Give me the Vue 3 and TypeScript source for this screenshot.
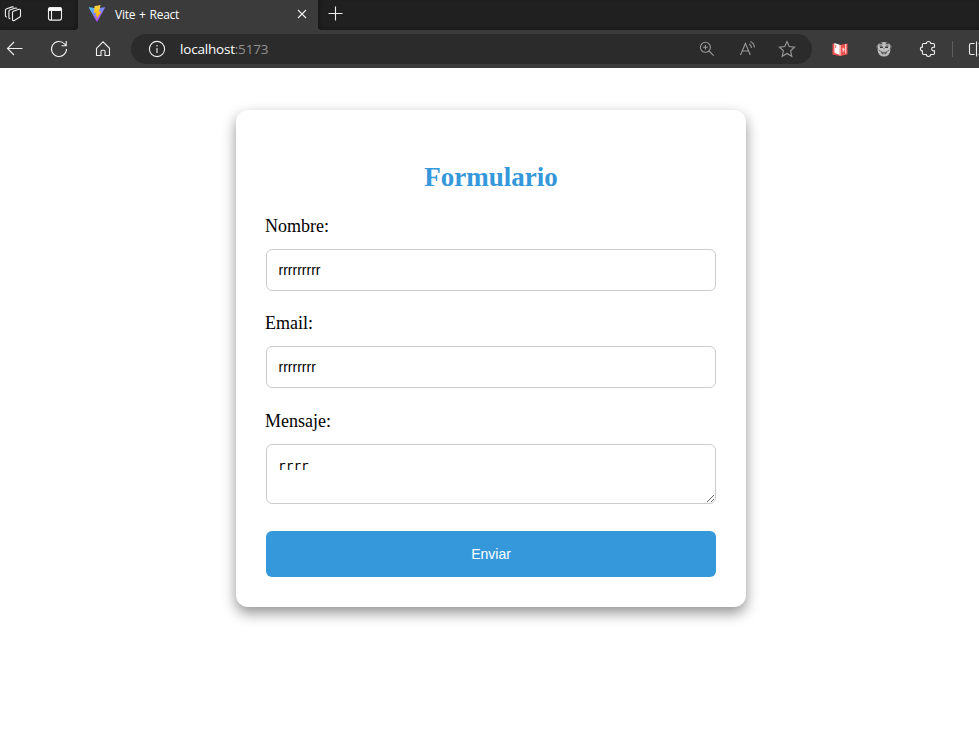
<script setup lang="ts">
import { ref } from 'vue'

const nombre = ref('rrrrrrrrr')
const email = ref('rrrrrrrr')
const mensaje = ref('rrrr')
</script>

<template>
  <div class="window">
    <header class="browser">
      <div class="tabs">
        <div class="tabs-left">
          <svg class="workspaces" width="18" height="18" viewBox="0 0 18 18">
            <path d="m9.3 6.3 5.7-2q1.5-.4 1.5 1v5.4q0 1-1 1.5l-5.2 3.2q-1.8.7-1.8-1V7.6q0-1 .8-1.3ZM6.3 13.6q-1.4.3-1.4-1.3V6.4q0-1 .8-1.3l5.8-2q1.2-.3 1.5.6M2.8 11.9q-1.4.2-1.4-1.3V5.2q0-1 .8-1.3l5.8-2q1.2-.3 1.5.6" />
          </svg>
          <svg class="tab-actions" width="16" height="16" viewBox="0 0 16 16">
            <rect x="1.5" y="1.5" width="13" height="12.6" rx="2" />
            <path class="solid" d="M1.5 3.5a2 2 0 0 1 2-2h9a2 2 0 0 1 2 2V4.5h-13Z" />
            <path d="M4.5 5v9" />
          </svg>
        </div>
        <div class="tab">
          <svg class="vite" width="18" height="18" viewBox="0 0 18 18">
            <defs>
              <linearGradient id="viteBody" x1="0" y1="0" x2="0.7" y2="1">
                <stop offset="0" stop-color="#41d1ff" />
                <stop offset="1" stop-color="#bd34fe" />
              </linearGradient>
              <linearGradient id="viteBolt" x1="0" y1="0" x2="0" y2="1">
                <stop offset="0" stop-color="#ffd848" />
                <stop offset="0.3" stop-color="#ffc928" />
                <stop offset="1" stop-color="#ffa800" />
              </linearGradient>
            </defs>
            <path fill="url(#viteBody)" d="M16.9 3 9.4 16.5a.5.5 0 0 1-.8 0L1 3c-.3-.5 0-.8.5-.7L9 3.6l7.4-1.3c.5-.1.8.3.5.7Z" />
            <path fill="url(#viteBolt)" d="M12.6 0 6.5 1.2 6 8l2.3-.3-.7 3.4 1.6-.3-.8 4 4.8-8.3-2.2.3Z" />
          </svg>
          <span class="tab-title">Vite + React</span>
          <svg class="close" width="10" height="10" viewBox="0 0 10 10"><path d="m1 1 8 8M9 1 1 9" /></svg>
        </div>
        <div class="tabs-right">
          <svg width="15" height="15" viewBox="0 0 15 15"><path d="M7.5.5v14M.5 7.5h14" /></svg>
        </div>
      </div>

      <div class="toolbar">
        <div class="nav">
          <svg width="18" height="18" viewBox="0 0 18 18"><path d="M16.5 8.5H1.5M8 2 1.5 8.5 8 15" /></svg>
          <svg width="18" height="18" viewBox="0 0 18 18"><path d="M16.5 9A7.5 7.5 0 1 1 14.6 4L16 5.5M16.2 1v4.8h-4.7" /></svg>
          <svg width="18" height="18" viewBox="0 0 18 18"><path d="M2.5 8.3 9 1.8l6.5 6.5v7.2H11v-4.3q0-1-1-1H8q-1 0-1 1v4.3H2.5Z" /></svg>
        </div>
        <div class="address">
          <svg class="info" width="18" height="18" viewBox="0 0 18 18">
            <circle cx="9" cy="9" r="7.6" /><path d="M9 8v5M9 5v1.4" />
          </svg>
          <span class="url">localhost<span class="port">:5173</span></span>
          <div class="address-actions">
            <svg width="18" height="18" viewBox="0 0 18 18"><circle cx="7.4" cy="7.3" r="5" /><path d="m11 11 4.7 4.7M7.4 5v4.6M5.1 7.3h4.6" /></svg>
            <svg width="18" height="18" viewBox="0 0 18 18"><path d="M2.5 15 7.4 3.5 12.3 15M4.2 11h6.4M11.3 4q2 1.4 2.2 4M12.5 1.5q3.8 2 3.9 6" /></svg>
            <svg width="18" height="18" viewBox="0 0 18 18"><path d="m9 1.5 2.2 5 5.4.6-4 3.7 1.2 5.5L9 13.5l-4.8 2.8 1.2-5.5-4-3.7 5.4-.6Z" /></svg>
          </div>
        </div>
        <div class="extensions">
          <svg class="book" width="16" height="16" viewBox="0 0 16 16">
            <path fill="#ef5350" d="M.5 2.5 8 4l7.5-1.5v11L8 15 .5 13.5Z" />
            <path fill="#fff" d="m2.4 2 5.2 1.7v10l-5.2-2Z" />
            <path fill="#ef5350" d="M3.3 4.1h.9v3h-.9Z" />
            <path stroke="#ffd2d0" fill="none" d="M8.1 4v10.5M10.3 8.5l1.2-1 .8 1-1.3 1.5v.8M13.7 3v9.5" />
          </svg>
          <svg class="monkey" width="18" height="18" viewBox="0 0 18 18">
            <circle cx="3.3" cy="6.5" r="2" fill="#777" /><circle cx="14.7" cy="6.5" r="2" fill="#777" />
            <path fill="#bdbdbd" d="M3.3 4q5.7-4 11.4 0l.7 6.5q-1 6-6.4 6t-6.4-6Z" />
            <path fill="#333" d="M4 3.6 6 2.5l2 2ZM14 3.6l-2-1.1-2 2ZM5 6.5h2.8V8H5ZM10.2 6.5H13V8h-2.8ZM5.5 11h7q-1 3.7-3.5 3.7T5.5 11Z" />
            <path stroke="#e5e5e5" stroke-width="1" d="M6.3 11.8h5.4M7.5 9.5h3M7.6 14h2.8" />
            <path stroke="#555" stroke-width=".7" fill="none" d="m4 5 3 .5M14 5l-3 .5M3.5 10l2 1M14.5 10l-2 1M8 9h2" />
          </svg>
          <svg class="puzzle" width="18" height="18" viewBox="0 0 18 18">
            <path d="M4.6 3.5h2.7Q7.4 1.5 9.5 1.5t2.2 2h2.6q1.2 0 1.2 1.2v2.4q-2.8-.2-2.8 1.9t2.8 1.9v2.4q0 1.2-1.2 1.2h-2.6q-.1 2-2.2 2t-2.2-2H4.6q-1.2 0-1.2-1.2v-2.4Q1.4 10.900 1.400 9t2-1.900V4.700q0-1.200 1.200-1.200Z" />
          </svg>
          <span class="divider"></span>
          <svg class="split" width="11" height="18" viewBox="0 0 11 18"><path d="M6.500 3.500H3q-1.500 0-1.500 1.500v8q0 1.500 1.500 1.500h3.500M8.500 1.500v15M10.500 3.500h1M10.500 14.500h1" /></svg>
        </div>
      </div>
    </header>

    <main class="page">
      <form class="card" @submit.prevent>
        <h2>Formulario</h2>
        <label for="nombre">Nombre:</label>
        <input id="nombre" v-model="nombre" type="text" />
        <label for="email">Email:</label>
        <input id="email" v-model="email" type="text" />
        <label for="mensaje">Mensaje:</label>
        <textarea id="mensaje" v-model="mensaje" spellcheck="false"></textarea>
        <button type="submit">Enviar</button>
      </form>
    </main>
  </div>
</template>

<style>
body {
  background: #fff;
  overflow: hidden;
}
</style>

<style scoped>
.window {
  height: 736px;
  overflow: hidden;
  background: #fff;
}
.browser {
  height: 68px;
  background: #3b3b3b;
  color: #fff;
  font-family: "Open Sans", "Noto Sans", sans-serif;
}
.browser svg {
  display: block;
  flex: none;
  fill: none;
  stroke: #eee;
  stroke-width: 1.1;
}
.tabs {
  display: flex;
  height: 30px;
}
.tabs-left {
  display: flex;
  box-sizing: border-box;
  width: 78px;
  padding: 5px 0 0 4px;
  background: #202020;
  border-bottom-right-radius: 4px;
  box-shadow: inset -2px -2px 3px #191919;
}
.tab-actions {
  margin: 1px 0 0 25px;
}
.tab-actions .solid {
  fill: #fff;
}
.tab {
  display: flex;
  align-items: center;
  box-sizing: border-box;
  width: 240px;
  height: 28px;
  padding: 0 11px 0 10px;
}
.browser .vite,
.browser .book,
.browser .monkey {
  stroke: none;
}
.tab-title {
  flex: 1;
  margin-left: 9px;
  font-size: 12px;
  letter-spacing: -0.25px;
  word-spacing: 1px;
}
.tabs-right {
  flex: 1;
  padding: 6px 0 0 10px;
  background: #202020;
  border-bottom-left-radius: 4px;
  box-shadow: inset 2px -2px 3px #191919;
}
.toolbar {
  display: flex;
  align-items: center;
  height: 38px;
}
.nav {
  display: flex;
  gap: 26px;
  width: 125px;
  padding-left: 6px;
}
.address {
  display: flex;
  align-items: center;
  box-sizing: border-box;
  width: 681px;
  height: 30px;
  padding: 0 16px 0 17px;
  border-radius: 15px;
  background: #2b2b2b;
}
.url {
  flex: 1;
  margin-left: 14px;
  font-size: 13.5px;
  letter-spacing: -0.2px;
}
.port {
  color: #919191;
}
.address-actions {
  display: flex;
  gap: 22px;
}
.address-actions svg {
  stroke: #999;
}
.extensions {
  display: flex;
  align-items: center;
  padding-left: 20px;
}
.monkey {
  margin-left: 27px;
}
.puzzle {
  margin-left: 26px;
}
.divider {
  width: 1px;
  height: 16px;
  margin: 0 15px 0 15px;
  background: #5d5d5d;
}
.page {
  display: flex;
  justify-content: center;
  padding: 42px 0 0 3px;
}
.card {
  display: flex;
  flex-direction: column;
  box-sizing: border-box;
  width: 510px;
  height: 497px;
  padding: 51px 30px 30px;
  border-radius: 12px;
  background: #fff;
  box-shadow: 0 6px 14px rgba(0, 0, 0, 0.43);
  font: 18px/20px "Liberation Serif", "Times New Roman", serif;
}
h2 {
  margin: 0 0 23px;
  color: #3498db;
  font-size: 27px;
  line-height: 32px;
  text-align: center;
}
label {
  margin: 0 0 13px -1px;
  color: #000;
}
input,
textarea {
  display: block;
  box-sizing: border-box;
  flex: none;
  width: 100%;
  margin: 0 0 22px;
  padding: 12px 12px 12px 11.5px;
  border: 1px solid #ccc;
  border-radius: 6px;
  outline: none;
  background: #fff;
  color: #000;
}
input {
  height: 42px;
  font: 14px "Liberation Sans", Arial, sans-serif;
}
#email {
  margin-bottom: 23px;
}
textarea {
  height: 60px;
  margin-bottom: 27px;
  padding-left: 11px;
  font: 12.8px/17px "DejaVu Sans Mono", monospace;
  resize: vertical;
}
button {
  flex: none;
  height: 46px;
  padding: 0;
  border: 0;
  border-radius: 6px;
  background: #3498db;
  color: #fff;
  font: 14px "Liberation Sans", Arial, sans-serif;
}
</style>
